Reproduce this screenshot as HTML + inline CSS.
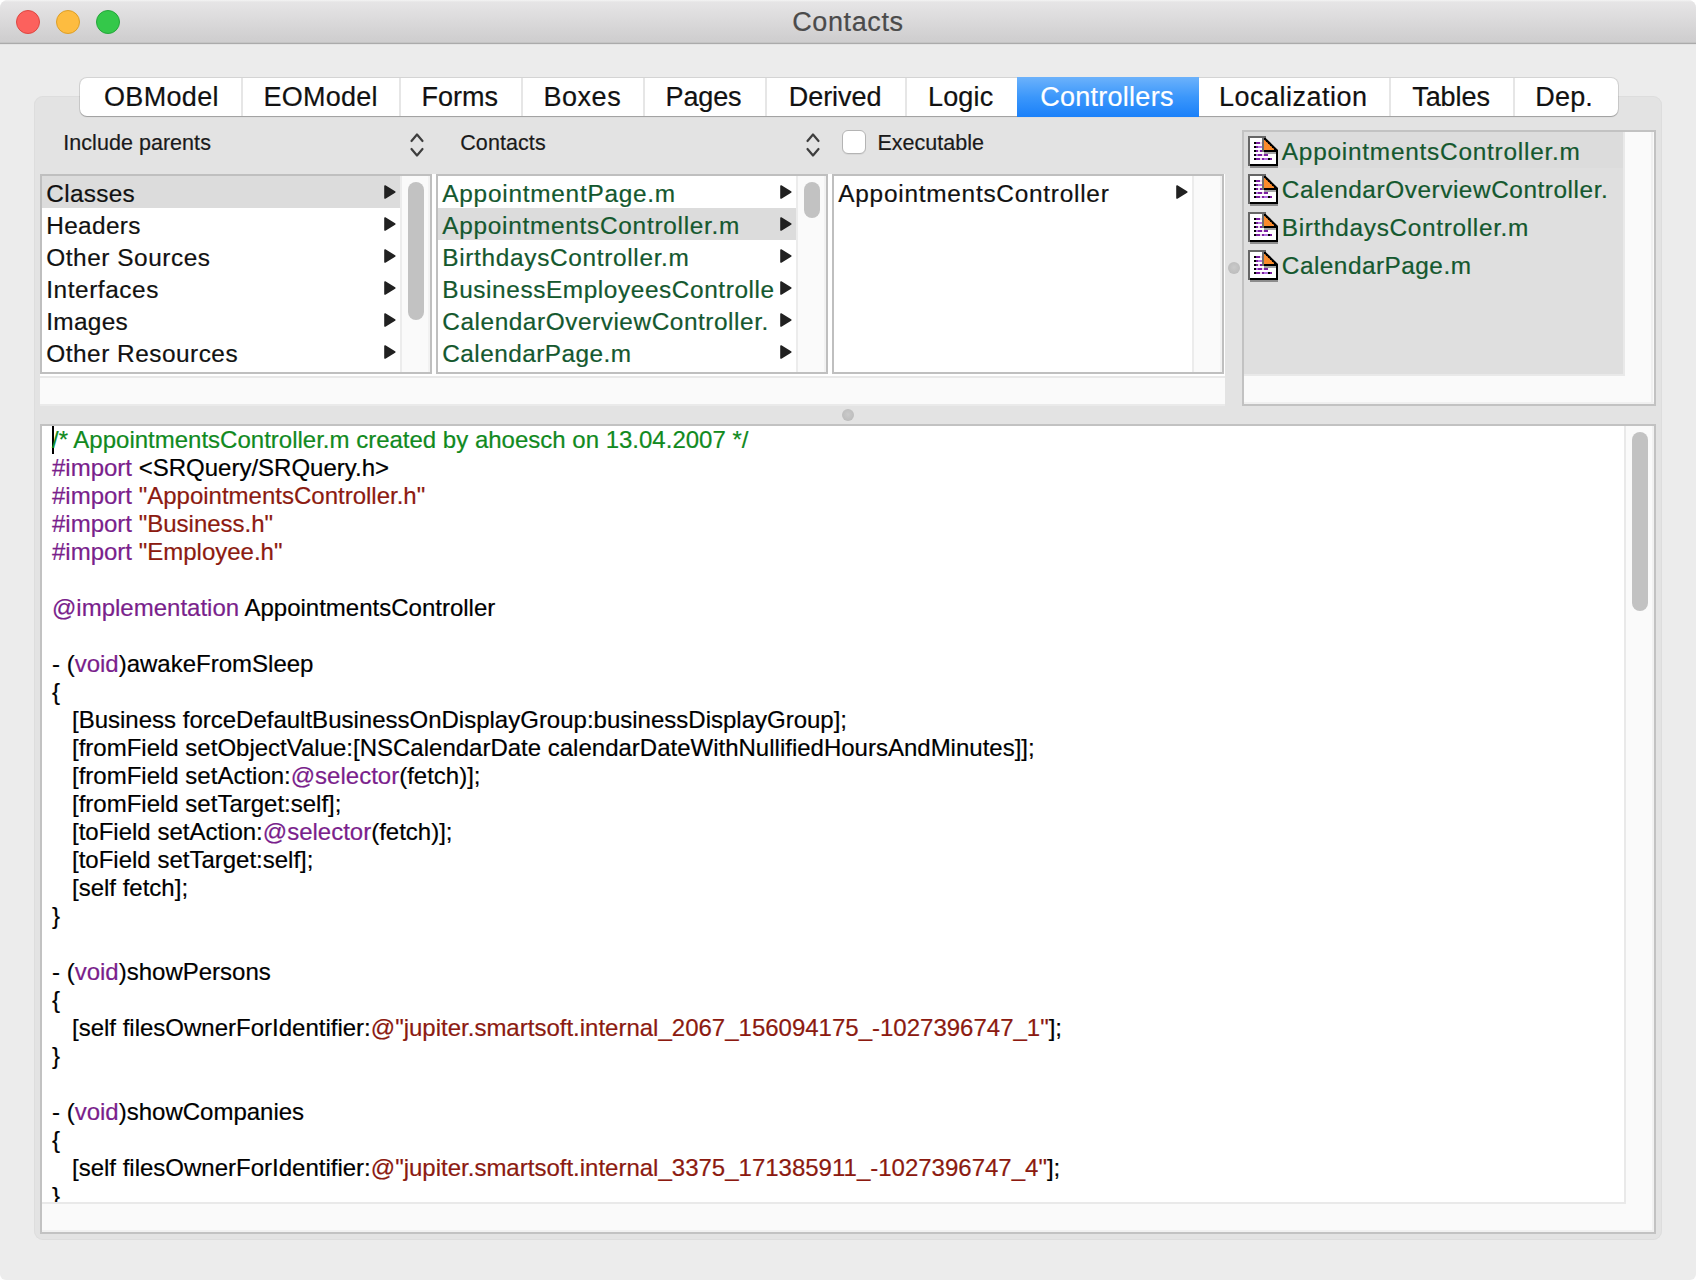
<!DOCTYPE html>
<html><head><meta charset="utf-8"><title>Contacts</title>
<style>
html,body{margin:0;padding:0;}
body{width:1696px;height:1280px;overflow:hidden;background:#fff;font-family:"Liberation Sans",sans-serif;position:relative;}
.abs{position:absolute;}
#win{position:absolute;left:0;top:0;width:1696px;height:1280px;background:#ececec;border-radius:8px 8px 6px 6px;overflow:hidden;}
#tb{position:absolute;left:0;top:0;width:1696px;height:45px;background:linear-gradient(#f4f4f4 0px,#e6e5e6 2px,#dad9da 22px,#d0cfd0 38px,#cfcecf 42px,#c4c4c4 42px,#c4c4c4 43px,#ababab 43px,#ababab 44px,#e4e4e4 44px,#e4e4e4 45px);}
.tl{position:absolute;top:10px;width:24px;height:24px;border-radius:50%;box-sizing:border-box;}
.t{position:absolute;white-space:nowrap;line-height:1;-webkit-text-stroke:0.2px;}
#grp{position:absolute;left:34px;top:96px;width:1628px;height:1144px;background:#e3e3e3;border-radius:9px;box-shadow:inset 0 0 0 1px #dddddd;}
#tabs{position:absolute;left:80px;top:78px;width:1538px;height:38px;border-radius:7px;background:#fff;box-shadow:0 0 0 1px rgba(0,0,0,0.10),0 1px 1px rgba(0,0,0,0.22);overflow:hidden;}
.sep{position:absolute;top:0;width:2px;height:38px;background:#e6e6e6;}
.tab{font-size:27px;color:#111;}
.col{position:absolute;background:#fff;border:2px solid #bfbfbf;box-sizing:border-box;}
.trk{position:absolute;background:#fafafa;border-left:2px solid #ececec;border-right:2px solid #f2f2f2;box-sizing:border-box;}
.thumb{position:absolute;background:#c2c2c2;border-radius:8px;}
.row{font-size:24.4px;color:#111;}
.g{color:#14582e;}
.sel{position:absolute;background:#dcdcdc;}
.arr{position:absolute;width:0;height:0;border-left:12px solid #1e1e1e;border-top:7px solid transparent;border-bottom:7px solid transparent;}
.code{font-size:24px;color:#000;}
.cm{color:#118a1e;}.pp{color:#7a1f8c;}.st{color:#8c1a10;}
</style></head><body><div id="win">
<div id="tb"></div>
<div class="tl" style="left:16px;background:#fc615d;border:1px solid #de4741;"></div>
<div class="tl" style="left:56px;background:#fdbc40;border:1px solid #dd9f27;"></div>
<div class="tl" style="left:96px;background:#34c84a;border:1px solid #25a63b;"></div>
<div id="title" class="t " style="left:792.15px;top:9px;letter-spacing:0.627px;font-size:27px;color:#4b4b4b;">Contacts</div>
<div id="grp"></div>
<div id="tabs">
<div class="sep" style="left:161px"></div><div class="sep" style="left:319px"></div><div class="sep" style="left:441px"></div><div class="sep" style="left:563px"></div><div class="sep" style="left:685px"></div><div class="sep" style="left:825px"></div><div class="sep" style="left:1309px"></div><div class="sep" style="left:1433px"></div></div>
<div class="abs" style="left:1017px;top:77px;width:182px;height:40px;background:linear-gradient(#6cb2fb,#3b97fb 50%,#1a80f9);"></div>
<div id="tab0" class="t tab" style="left:104.0px;top:84px;letter-spacing:0.319px;">OBModel</div>
<div id="tab1" class="t tab" style="left:263.62px;top:84px;letter-spacing:0.226px;">EOModel</div>
<div id="tab2" class="t tab" style="left:421.5px;top:84px;letter-spacing:0.025px;">Forms</div>
<div id="tab3" class="t tab" style="left:543.5px;top:84px;letter-spacing:0.525px;">Boxes</div>
<div id="tab4" class="t tab" style="left:665.62px;top:84px;letter-spacing:-0.171px;">Pages</div>
<div id="tab5" class="t tab" style="left:788.75px;top:84px;letter-spacing:-0.065px;">Derived</div>
<div id="tab6" class="t tab" style="left:928.0px;top:84px;letter-spacing:0.15px;">Logic</div>
<div id="tab7" class="t tab" style="left:1040.25px;top:84px;letter-spacing:0.26px;color:#fff;">Controllers</div>
<div id="tab8" class="t tab" style="left:1219.12px;top:84px;letter-spacing:0.486px;">Localization</div>
<div id="tab9" class="t tab" style="left:1412.25px;top:84px;letter-spacing:-0.08px;">Tables</div>
<div id="tab10" class="t tab" style="left:1535.25px;top:84px;letter-spacing:0.198px;">Dep.</div>
<div id="pop1" class="t " style="left:63.25px;top:132.6px;letter-spacing:0.044px;font-size:21.5px;color:#1a1a1a;">Include parents</div>
<div id="pop2" class="t " style="left:460.25px;top:132.6px;letter-spacing:0.082px;font-size:21.5px;color:#1a1a1a;">Contacts</div>
<div id="exec" class="t " style="left:877.5px;top:132.6px;letter-spacing:0.007px;font-size:21.5px;color:#1a1a1a;">Executable</div>
<svg class="abs" style="left:407px;top:130px" width="20" height="30" viewBox="0 0 20 30"><path d="M4.5 11 L10 4.5 L15.5 11 M4.5 19 L10 25.5 L15.5 19" fill="none" stroke="#3e3e3e" stroke-width="2.2" stroke-linecap="round" stroke-linejoin="round"/></svg>
<svg class="abs" style="left:803px;top:130px" width="20" height="30" viewBox="0 0 20 30"><path d="M4.5 11 L10 4.5 L15.5 11 M4.5 19 L10 25.5 L15.5 19" fill="none" stroke="#3e3e3e" stroke-width="2.2" stroke-linecap="round" stroke-linejoin="round"/></svg>
<div class="abs" style="left:842px;top:130px;width:24px;height:24px;box-sizing:border-box;border:1px solid #b4b4b4;border-radius:6px;background:#fff;box-shadow:0 1px 0 rgba(0,0,0,0.05);"></div>
<div class="abs" style="left:40px;top:174px;width:1185px;height:230px;background:#fff;"></div>
<div class="abs" style="left:40px;top:376px;width:1185px;height:28px;background:#fafafa;border-top:2px solid #e8e8e8;box-sizing:border-box;"></div>
<div class="abs" style="left:40px;top:404px;width:1185px;height:2px;background:#eaeaea;"></div>
<div class="col" style="left:40px;top:174px;width:392px;height:200px;"></div>
<div class="trk" style="left:400px;top:176px;width:30px;height:196px;"></div>
<div class="col" style="left:436px;top:174px;width:392px;height:200px;"></div>
<div class="trk" style="left:796px;top:176px;width:30px;height:196px;"></div>
<div class="col" style="left:832px;top:174px;width:392px;height:200px;"></div>
<div class="trk" style="left:1192px;top:176px;width:30px;height:196px;"></div>
<div class="sel" style="left:42px;top:176px;width:358px;height:32px;"></div>
<div class="sel" style="left:438px;top:208px;width:358px;height:32px;"></div>
<div class="thumb" style="left:408px;top:182px;width:16px;height:138px;"></div>
<div class="thumb" style="left:804px;top:182px;width:16px;height:36px;"></div>
<div id="c1_0" class="t row" style="left:46.3px;top:182px;letter-spacing:0.288px;">Classes</div>
<svg class="abs arr2" style="left:384px;top:185px" width="12" height="14" viewBox="0 0 12 14"><path d="M1 1 L10.7 7 L1 13 Z" fill="#212121" stroke="#212121" stroke-width="1.6" stroke-linejoin="round"/></svg>
<div id="c1_1" class="t row" style="left:46.3px;top:214px;letter-spacing:0.318px;">Headers</div>
<svg class="abs arr2" style="left:384px;top:217px" width="12" height="14" viewBox="0 0 12 14"><path d="M1 1 L10.7 7 L1 13 Z" fill="#212121" stroke="#212121" stroke-width="1.6" stroke-linejoin="round"/></svg>
<div id="c1_2" class="t row" style="left:46.3px;top:246px;letter-spacing:0.537px;">Other Sources</div>
<svg class="abs arr2" style="left:384px;top:249px" width="12" height="14" viewBox="0 0 12 14"><path d="M1 1 L10.7 7 L1 13 Z" fill="#212121" stroke="#212121" stroke-width="1.6" stroke-linejoin="round"/></svg>
<div id="c1_3" class="t row" style="left:46.3px;top:278px;letter-spacing:0.549px;">Interfaces</div>
<svg class="abs arr2" style="left:384px;top:281px" width="12" height="14" viewBox="0 0 12 14"><path d="M1 1 L10.7 7 L1 13 Z" fill="#212121" stroke="#212121" stroke-width="1.6" stroke-linejoin="round"/></svg>
<div id="c1_4" class="t row" style="left:46.3px;top:310px;letter-spacing:0.28px;">Images</div>
<svg class="abs arr2" style="left:384px;top:313px" width="12" height="14" viewBox="0 0 12 14"><path d="M1 1 L10.7 7 L1 13 Z" fill="#212121" stroke="#212121" stroke-width="1.6" stroke-linejoin="round"/></svg>
<div id="c1_5" class="t row" style="left:46.3px;top:342px;letter-spacing:0.498px;">Other Resources</div>
<svg class="abs arr2" style="left:384px;top:345px" width="12" height="14" viewBox="0 0 12 14"><path d="M1 1 L10.7 7 L1 13 Z" fill="#212121" stroke="#212121" stroke-width="1.6" stroke-linejoin="round"/></svg>
<div id="c2_0" class="t row g" style="left:442.3px;top:182px;letter-spacing:0.742px;">AppointmentPage.m</div>
<svg class="abs arr2" style="left:780px;top:185px" width="12" height="14" viewBox="0 0 12 14"><path d="M1 1 L10.7 7 L1 13 Z" fill="#212121" stroke="#212121" stroke-width="1.6" stroke-linejoin="round"/></svg>
<div id="c2_1" class="t row g" style="left:442.3px;top:214px;letter-spacing:0.714px;">AppointmentsController.m</div>
<svg class="abs arr2" style="left:780px;top:217px" width="12" height="14" viewBox="0 0 12 14"><path d="M1 1 L10.7 7 L1 13 Z" fill="#212121" stroke="#212121" stroke-width="1.6" stroke-linejoin="round"/></svg>
<div id="c2_2" class="t row g" style="left:442.3px;top:246px;letter-spacing:0.67px;">BirthdaysController.m</div>
<svg class="abs arr2" style="left:780px;top:249px" width="12" height="14" viewBox="0 0 12 14"><path d="M1 1 L10.7 7 L1 13 Z" fill="#212121" stroke="#212121" stroke-width="1.6" stroke-linejoin="round"/></svg>
<div id="c2_3" class="t row g" style="left:442.3px;top:278px;letter-spacing:0.584px;">BusinessEmployeesControlle</div>
<svg class="abs arr2" style="left:780px;top:281px" width="12" height="14" viewBox="0 0 12 14"><path d="M1 1 L10.7 7 L1 13 Z" fill="#212121" stroke="#212121" stroke-width="1.6" stroke-linejoin="round"/></svg>
<div id="c2_4" class="t row g" style="left:442.3px;top:310px;letter-spacing:0.544px;">CalendarOverviewController.</div>
<svg class="abs arr2" style="left:780px;top:313px" width="12" height="14" viewBox="0 0 12 14"><path d="M1 1 L10.7 7 L1 13 Z" fill="#212121" stroke="#212121" stroke-width="1.6" stroke-linejoin="round"/></svg>
<div id="c2_5" class="t row g" style="left:442.3px;top:342px;letter-spacing:0.443px;">CalendarPage.m</div>
<svg class="abs arr2" style="left:780px;top:345px" width="12" height="14" viewBox="0 0 12 14"><path d="M1 1 L10.7 7 L1 13 Z" fill="#212121" stroke="#212121" stroke-width="1.6" stroke-linejoin="round"/></svg>
<div id="c3_0" class="t row" style="left:838.3px;top:182px;letter-spacing:0.743px;">AppointmentsController</div>
<svg class="abs arr2" style="left:1176px;top:185px" width="12" height="14" viewBox="0 0 12 14"><path d="M1 1 L10.7 7 L1 13 Z" fill="#212121" stroke="#212121" stroke-width="1.6" stroke-linejoin="round"/></svg>
<div class="abs" style="left:1228px;top:262px;width:12px;height:12px;border-radius:50%;background:radial-gradient(circle at 50% 45%,#cacaca,#bdbdbd 70%,#b2b2b2);"></div>
<div class="abs" style="left:842px;top:409px;width:12px;height:12px;border-radius:50%;background:radial-gradient(circle at 50% 45%,#cacaca,#bdbdbd 70%,#b2b2b2);"></div>
<div class="abs" style="left:1242px;top:130px;width:414px;height:276px;box-sizing:border-box;border:2px solid #c2c2c2;background:#fafafa;"></div>
<div class="abs" style="left:1244px;top:132px;width:381px;height:244px;background:#e9e9e9;"></div>
<div class="abs" style="left:1244px;top:132px;width:379px;height:242px;background:#dfdfdf;"></div>
<div class="abs" style="left:1244px;top:132px;width:379px;height:36px;background:#dcdcdc;"></div>
<div class="abs" style="left:1651px;top:132px;width:2px;height:272px;background:#f0f0f0;"></div>
<div class="abs" style="left:1244px;top:402px;width:410px;height:2px;background:#f0f0f0;"></div>
<svg class="abs" style="left:1248px;top:136px" width="30" height="32" viewBox="0 0 15 16" shape-rendering="crispEdges">
<polygon points="1,1 8,1 14,7 14,14 1,14" fill="#fff"/>
<rect x="1" y="15" width="14" height="1" fill="#8c8c8c"/>
<rect x="0" y="0" width="1" height="15" fill="#666"/><rect x="0" y="0" width="9" height="1" fill="#666"/>
<rect x="7" y="1" width="1" height="7" fill="#6e6e6e"/>
<polygon points="8,1.5 8,7 14,7" fill="#fb8b2c" shape-rendering="geometricPrecision"/>
<rect x="8" y="8" width="6" height="1" fill="#a4a4a4"/>
<rect x="8" y="7" width="7" height="1" fill="#000"/>
<rect x="14" y="7" width="1" height="8" fill="#000"/><rect x="1" y="14" width="14" height="1" fill="#000"/>
<path d="M8.3 1.2 L14.9 7.6" stroke="#000" stroke-width="1.05" fill="none" shape-rendering="geometricPrecision"/><path d="M8 1h1v1h1v1h1v1h1v1h1v1h1v1h1v1h-1v-1h-1v-1h-1v-1h-1v-1h-1v-1h-1v-1h-1z" fill="#000"/>
<rect x="3" y="3" width="1" height="1" fill="#000"/><rect x="4" y="3" width="2" height="1" fill="#7a1fa0"/><rect x="6" y="3" width="1" height="1" fill="#ecd3ee"/>
<rect x="3" y="5" width="1" height="1" fill="#000"/><rect x="4" y="5" width="1" height="1" fill="#7a1fa0"/><rect x="5" y="5" width="2" height="1" fill="#b473e0"/>
<rect x="3" y="7" width="1" height="1" fill="#000"/><rect x="4" y="7" width="1" height="1" fill="#7a1fa0"/><rect x="5" y="7" width="1" height="1" fill="#ecd3ee"/><rect x="6" y="7" width="1" height="1" fill="#7a1fa0"/>
<rect x="3" y="9" width="1" height="1" fill="#000"/><rect x="4" y="9" width="1" height="1" fill="#b473e0"/><rect x="5" y="9" width="2" height="1" fill="#7a1fa0"/><rect x="7" y="9" width="1" height="1" fill="#ecd3ee"/><rect x="8" y="9" width="2" height="1" fill="#7a1fa0"/>
<rect x="3" y="11" width="1" height="1" fill="#000"/><rect x="4" y="11" width="2" height="1" fill="#7a1fa0"/><rect x="6" y="11" width="1" height="1" fill="#ecd3ee"/><rect x="7" y="11" width="1" height="1" fill="#7a1fa0"/><rect x="8" y="11" width="2" height="1" fill="#b473e0"/><rect x="10" y="11" width="1" height="1" fill="#000"/><rect x="11" y="11" width="1" height="1" fill="#7a1fa0"/>
</svg>
<div id="fl0" class="t row g" style="left:1281.8px;top:140px;letter-spacing:0.759px;">AppointmentsController.m</div>
<svg class="abs" style="left:1248px;top:174px" width="30" height="32" viewBox="0 0 15 16" shape-rendering="crispEdges">
<polygon points="1,1 8,1 14,7 14,14 1,14" fill="#fff"/>
<rect x="1" y="15" width="14" height="1" fill="#8c8c8c"/>
<rect x="0" y="0" width="1" height="15" fill="#666"/><rect x="0" y="0" width="9" height="1" fill="#666"/>
<rect x="7" y="1" width="1" height="7" fill="#6e6e6e"/>
<polygon points="8,1.5 8,7 14,7" fill="#fb8b2c" shape-rendering="geometricPrecision"/>
<rect x="8" y="8" width="6" height="1" fill="#a4a4a4"/>
<rect x="8" y="7" width="7" height="1" fill="#000"/>
<rect x="14" y="7" width="1" height="8" fill="#000"/><rect x="1" y="14" width="14" height="1" fill="#000"/>
<path d="M8.3 1.2 L14.9 7.6" stroke="#000" stroke-width="1.05" fill="none" shape-rendering="geometricPrecision"/><path d="M8 1h1v1h1v1h1v1h1v1h1v1h1v1h1v1h-1v-1h-1v-1h-1v-1h-1v-1h-1v-1h-1v-1h-1z" fill="#000"/>
<rect x="3" y="3" width="1" height="1" fill="#000"/><rect x="4" y="3" width="2" height="1" fill="#7a1fa0"/><rect x="6" y="3" width="1" height="1" fill="#ecd3ee"/>
<rect x="3" y="5" width="1" height="1" fill="#000"/><rect x="4" y="5" width="1" height="1" fill="#7a1fa0"/><rect x="5" y="5" width="2" height="1" fill="#b473e0"/>
<rect x="3" y="7" width="1" height="1" fill="#000"/><rect x="4" y="7" width="1" height="1" fill="#7a1fa0"/><rect x="5" y="7" width="1" height="1" fill="#ecd3ee"/><rect x="6" y="7" width="1" height="1" fill="#7a1fa0"/>
<rect x="3" y="9" width="1" height="1" fill="#000"/><rect x="4" y="9" width="1" height="1" fill="#b473e0"/><rect x="5" y="9" width="2" height="1" fill="#7a1fa0"/><rect x="7" y="9" width="1" height="1" fill="#ecd3ee"/><rect x="8" y="9" width="2" height="1" fill="#7a1fa0"/>
<rect x="3" y="11" width="1" height="1" fill="#000"/><rect x="4" y="11" width="2" height="1" fill="#7a1fa0"/><rect x="6" y="11" width="1" height="1" fill="#ecd3ee"/><rect x="7" y="11" width="1" height="1" fill="#7a1fa0"/><rect x="8" y="11" width="2" height="1" fill="#b473e0"/><rect x="10" y="11" width="1" height="1" fill="#000"/><rect x="11" y="11" width="1" height="1" fill="#7a1fa0"/>
</svg>
<div id="fl1" class="t row g" style="left:1281.8px;top:178px;letter-spacing:0.544px;">CalendarOverviewController.</div>
<svg class="abs" style="left:1248px;top:212px" width="30" height="32" viewBox="0 0 15 16" shape-rendering="crispEdges">
<polygon points="1,1 8,1 14,7 14,14 1,14" fill="#fff"/>
<rect x="1" y="15" width="14" height="1" fill="#8c8c8c"/>
<rect x="0" y="0" width="1" height="15" fill="#666"/><rect x="0" y="0" width="9" height="1" fill="#666"/>
<rect x="7" y="1" width="1" height="7" fill="#6e6e6e"/>
<polygon points="8,1.5 8,7 14,7" fill="#fb8b2c" shape-rendering="geometricPrecision"/>
<rect x="8" y="8" width="6" height="1" fill="#a4a4a4"/>
<rect x="8" y="7" width="7" height="1" fill="#000"/>
<rect x="14" y="7" width="1" height="8" fill="#000"/><rect x="1" y="14" width="14" height="1" fill="#000"/>
<path d="M8.3 1.2 L14.9 7.6" stroke="#000" stroke-width="1.05" fill="none" shape-rendering="geometricPrecision"/><path d="M8 1h1v1h1v1h1v1h1v1h1v1h1v1h1v1h-1v-1h-1v-1h-1v-1h-1v-1h-1v-1h-1v-1h-1z" fill="#000"/>
<rect x="3" y="3" width="1" height="1" fill="#000"/><rect x="4" y="3" width="2" height="1" fill="#7a1fa0"/><rect x="6" y="3" width="1" height="1" fill="#ecd3ee"/>
<rect x="3" y="5" width="1" height="1" fill="#000"/><rect x="4" y="5" width="1" height="1" fill="#7a1fa0"/><rect x="5" y="5" width="2" height="1" fill="#b473e0"/>
<rect x="3" y="7" width="1" height="1" fill="#000"/><rect x="4" y="7" width="1" height="1" fill="#7a1fa0"/><rect x="5" y="7" width="1" height="1" fill="#ecd3ee"/><rect x="6" y="7" width="1" height="1" fill="#7a1fa0"/>
<rect x="3" y="9" width="1" height="1" fill="#000"/><rect x="4" y="9" width="1" height="1" fill="#b473e0"/><rect x="5" y="9" width="2" height="1" fill="#7a1fa0"/><rect x="7" y="9" width="1" height="1" fill="#ecd3ee"/><rect x="8" y="9" width="2" height="1" fill="#7a1fa0"/>
<rect x="3" y="11" width="1" height="1" fill="#000"/><rect x="4" y="11" width="2" height="1" fill="#7a1fa0"/><rect x="6" y="11" width="1" height="1" fill="#ecd3ee"/><rect x="7" y="11" width="1" height="1" fill="#7a1fa0"/><rect x="8" y="11" width="2" height="1" fill="#b473e0"/><rect x="10" y="11" width="1" height="1" fill="#000"/><rect x="11" y="11" width="1" height="1" fill="#7a1fa0"/>
</svg>
<div id="fl2" class="t row g" style="left:1281.8px;top:216px;letter-spacing:0.67px;">BirthdaysController.m</div>
<svg class="abs" style="left:1248px;top:250px" width="30" height="32" viewBox="0 0 15 16" shape-rendering="crispEdges">
<polygon points="1,1 8,1 14,7 14,14 1,14" fill="#fff"/>
<rect x="1" y="15" width="14" height="1" fill="#8c8c8c"/>
<rect x="0" y="0" width="1" height="15" fill="#666"/><rect x="0" y="0" width="9" height="1" fill="#666"/>
<rect x="7" y="1" width="1" height="7" fill="#6e6e6e"/>
<polygon points="8,1.5 8,7 14,7" fill="#fb8b2c" shape-rendering="geometricPrecision"/>
<rect x="8" y="8" width="6" height="1" fill="#a4a4a4"/>
<rect x="8" y="7" width="7" height="1" fill="#000"/>
<rect x="14" y="7" width="1" height="8" fill="#000"/><rect x="1" y="14" width="14" height="1" fill="#000"/>
<path d="M8.3 1.2 L14.9 7.6" stroke="#000" stroke-width="1.05" fill="none" shape-rendering="geometricPrecision"/><path d="M8 1h1v1h1v1h1v1h1v1h1v1h1v1h1v1h-1v-1h-1v-1h-1v-1h-1v-1h-1v-1h-1v-1h-1z" fill="#000"/>
<rect x="3" y="3" width="1" height="1" fill="#000"/><rect x="4" y="3" width="2" height="1" fill="#7a1fa0"/><rect x="6" y="3" width="1" height="1" fill="#ecd3ee"/>
<rect x="3" y="5" width="1" height="1" fill="#000"/><rect x="4" y="5" width="1" height="1" fill="#7a1fa0"/><rect x="5" y="5" width="2" height="1" fill="#b473e0"/>
<rect x="3" y="7" width="1" height="1" fill="#000"/><rect x="4" y="7" width="1" height="1" fill="#7a1fa0"/><rect x="5" y="7" width="1" height="1" fill="#ecd3ee"/><rect x="6" y="7" width="1" height="1" fill="#7a1fa0"/>
<rect x="3" y="9" width="1" height="1" fill="#000"/><rect x="4" y="9" width="1" height="1" fill="#b473e0"/><rect x="5" y="9" width="2" height="1" fill="#7a1fa0"/><rect x="7" y="9" width="1" height="1" fill="#ecd3ee"/><rect x="8" y="9" width="2" height="1" fill="#7a1fa0"/>
<rect x="3" y="11" width="1" height="1" fill="#000"/><rect x="4" y="11" width="2" height="1" fill="#7a1fa0"/><rect x="6" y="11" width="1" height="1" fill="#ecd3ee"/><rect x="7" y="11" width="1" height="1" fill="#7a1fa0"/><rect x="8" y="11" width="2" height="1" fill="#b473e0"/><rect x="10" y="11" width="1" height="1" fill="#000"/><rect x="11" y="11" width="1" height="1" fill="#7a1fa0"/>
</svg>
<div id="fl3" class="t row g" style="left:1281.8px;top:254px;letter-spacing:0.471px;">CalendarPage.m</div>
<div class="abs" style="left:40px;top:424px;width:1616px;height:810px;box-sizing:border-box;border:2px solid #c2c2c2;background:#fafafa;overflow:hidden;">
<div class="abs" style="left:0;top:0;width:1582px;height:776px;background:#fff;"></div>
<div class="abs" style="left:0;top:776px;width:1584px;height:2px;background:#e9e9e9;"></div>
<div class="abs" style="left:1582px;top:0;width:2px;height:778px;background:#e9e9e9;"></div>
<div class="abs" style="left:1610px;top:0;width:2px;height:806px;background:#f1f1f1;"></div>
<div class="abs" style="left:0;top:804px;width:1612px;height:2px;background:#f1f1f1;"></div>
<div class="thumb" style="left:1590px;top:6px;width:16px;height:179px;"></div>
<div class="abs" style="left:10px;top:0px;width:2px;height:28px;background:#000;"></div>
<div class="abs" style="left:0;top:0;width:1582px;height:776px;overflow:hidden;">
<div id="code0" class="t code" style="left:10px;top:0px;height:28px;line-height:28px;white-space:pre;"><span class="cm">/* AppointmentsController.m created by ahoesch on 13.04.2007 */</span></div>
<div id="code1" class="t code" style="left:10px;top:28px;height:28px;line-height:28px;white-space:pre;"><span class="pp">#import</span> &lt;SRQuery/SRQuery.h&gt;</div>
<div id="code2" class="t code" style="left:10px;top:56px;height:28px;line-height:28px;white-space:pre;"><span class="pp">#import</span> <span class="st">"AppointmentsController.h"</span></div>
<div id="code3" class="t code" style="left:10px;top:84px;height:28px;line-height:28px;white-space:pre;"><span class="pp">#import</span> <span class="st">"Business.h"</span></div>
<div id="code4" class="t code" style="left:10px;top:112px;height:28px;line-height:28px;white-space:pre;"><span class="pp">#import</span> <span class="st">"Employee.h"</span></div>
<div id="code6" class="t code" style="left:10px;top:168px;height:28px;line-height:28px;white-space:pre;"><span class="pp">@implementation</span> AppointmentsController</div>
<div id="code8" class="t code" style="left:10px;top:224px;height:28px;line-height:28px;white-space:pre;">- (<span class="pp">void</span>)awakeFromSleep</div>
<div id="code9" class="t code" style="left:10px;top:252px;height:28px;line-height:28px;white-space:pre;">{</div>
<div id="code10" class="t code" style="left:10px;top:280px;height:28px;line-height:28px;white-space:pre;">   [Business forceDefaultBusinessOnDisplayGroup:businessDisplayGroup];</div>
<div id="code11" class="t code" style="left:10px;top:308px;height:28px;line-height:28px;white-space:pre;">   [fromField setObjectValue:[NSCalendarDate calendarDateWithNullifiedHoursAndMinutes]];</div>
<div id="code12" class="t code" style="left:10px;top:336px;height:28px;line-height:28px;white-space:pre;">   [fromField setAction:<span class="pp">@selector</span>(fetch)];</div>
<div id="code13" class="t code" style="left:10px;top:364px;height:28px;line-height:28px;white-space:pre;">   [fromField setTarget:self];</div>
<div id="code14" class="t code" style="left:10px;top:392px;height:28px;line-height:28px;white-space:pre;">   [toField setAction:<span class="pp">@selector</span>(fetch)];</div>
<div id="code15" class="t code" style="left:10px;top:420px;height:28px;line-height:28px;white-space:pre;">   [toField setTarget:self];</div>
<div id="code16" class="t code" style="left:10px;top:448px;height:28px;line-height:28px;white-space:pre;">   [self fetch];</div>
<div id="code17" class="t code" style="left:10px;top:476px;height:28px;line-height:28px;white-space:pre;">}</div>
<div id="code19" class="t code" style="left:10px;top:532px;height:28px;line-height:28px;white-space:pre;">- (<span class="pp">void</span>)showPersons</div>
<div id="code20" class="t code" style="left:10px;top:560px;height:28px;line-height:28px;white-space:pre;">{</div>
<div id="code21" class="t code" style="left:10px;top:588px;height:28px;line-height:28px;white-space:pre;">   [self filesOwnerForIdentifier:<span class="st">@"jupiter.smartsoft.internal_2067_156094175_-1027396747_1"</span>];</div>
<div id="code22" class="t code" style="left:10px;top:616px;height:28px;line-height:28px;white-space:pre;">}</div>
<div id="code24" class="t code" style="left:10px;top:672px;height:28px;line-height:28px;white-space:pre;">- (<span class="pp">void</span>)showCompanies</div>
<div id="code25" class="t code" style="left:10px;top:700px;height:28px;line-height:28px;white-space:pre;">{</div>
<div id="code26" class="t code" style="left:10px;top:728px;height:28px;line-height:28px;white-space:pre;">   [self filesOwnerForIdentifier:<span class="st">@"jupiter.smartsoft.internal_3375_171385911_-1027396747_4"</span>];</div>
<div id="code27" class="t code" style="left:10px;top:756px;height:28px;line-height:28px;white-space:pre;">}</div>
</div></div>
</div></body></html>
